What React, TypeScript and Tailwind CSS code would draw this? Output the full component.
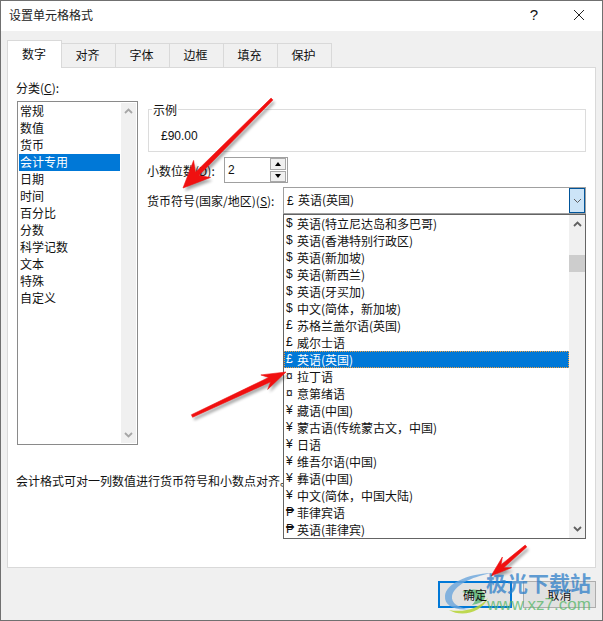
import React from "react";

const font = { fontFamily: '"Noto Sans CJK SC", "Liberation Sans", sans-serif' };
const latin = { fontFamily: '"Liberation Sans", sans-serif' };
const cats = ["常规", "数值", "货币", "会计专用", "日期", "时间", "百分比", "分数", "科学记数", "文本", "特殊", "自定义"];
const tabs = ["对齐", "字体", "边框", "填充", "保护"];
const items: [string, string][] = [
  ["$", "英语(特立尼达岛和多巴哥)"],
  ["$", "英语(香港特别行政区)"],
  ["$", "英语(新加坡)"],
  ["$", "英语(新西兰)"],
  ["$", "英语(牙买加)"],
  ["$", "中文(简体，新加坡)"],
  ["£", "苏格兰盖尔语(英国)"],
  ["£", "威尔士语"],
  ["£", "英语(英国)"],
  ["¤", "拉丁语"],
  ["¤", "意第绪语"],
  ["¥", "藏语(中国)"],
  ["¥", "蒙古语(传统蒙古文，中国)"],
  ["¥", "日语"],
  ["¥", "维吾尔语(中国)"],
  ["¥", "彝语(中国)"],
  ["¥", "中文(简体，中国大陆)"],
  ["₱", "菲律宾语"],
  ["₱", "英语(菲律宾)"],
];

function Chevron({ up, color = "#a6a6a6", sw = 1.8 }: { up?: boolean; color?: string; sw?: number }) {
  return (
    <svg width="9" height="6" viewBox="0 0 9 6" fill="none" stroke={color} strokeWidth={sw}>
      <path d={up ? "M1 5 L4.5 1.5 L8 5" : "M1 1 L4.5 4.5 L8 1"} />
    </svg>
  );
}

function Arrow({ x1, y1, x2, y2, hl, hw, nk, neck, tail }: { x1: number; y1: number; x2: number; y2: number; hl: number; hw: number; nk: number; neck: number; tail: number }) {
  const dx = x2 - x1, dy = y2 - y1;
  const len = Math.hypot(dx, dy);
  const ux = dx / len, uy = dy / len;
  const nx = -uy, ny = ux;
  const p = (a: number, b: number) => `${x2 - ux * a + nx * b},${y2 - uy * a + ny * b}`;
  const d = [p(len, tail), p(len, -tail), p(nk, -neck), p(hl, -hw), p(0, 0), p(hl, hw), p(nk, neck)].join(" ");
  return (
    <g>
      <polygon points={d} fill="#000" opacity="0.35" transform="translate(2,3)" style={{ filter: "blur(1.5px)" }} />
      <polygon points={d} fill="#f01010" strokeLinejoin="round" stroke="#f01010" strokeWidth="0.6" />
    </g>
  );
}

export default function App() {
  return (
    <div style={font} className="relative w-[603px] h-[621px] overflow-hidden bg-[#f0f0f0] border border-[#707070] text-[12px] leading-[17px] text-[#111]">
      <div className="h-[30px] bg-white flex items-center pl-[8px] pr-[17px] pb-[3px]">
        <span className="flex-1 text-[12px] text-[#222]">设置单元格格式</span>
        <span className="text-[15px] mr-[35px] font-medium" style={latin}>?</span>
        <svg width="12" height="12" viewBox="0 0 12 12" stroke="#222" strokeWidth="1" fill="none">
          <path d="M1 1 L11 11 M11 1 L1 11" />
        </svg>
      </div>

      <div className="pl-[6px] pr-[6px] pt-[9px]">
        <div className="flex items-end h-[27px] relative z-10">
          <div className="w-[55px] h-[28px] -mb-px bg-white border border-b-0 border-[#d9d9d9] flex items-center justify-center pb-[3px] pr-px">数字</div>
          {tabs.map((t) => (
            <div key={t} className="w-[54px] h-[24px] bg-[#f0f0f0] border-t border-r border-[#d9d9d9] flex items-center justify-center pb-[2px] pr-[2px]">{t}</div>
          ))}
        </div>

        <div className="h-[501px] bg-white border border-[#d9d9d9] pl-[8px] pr-[9px] pt-[12px]">
          <div className="flex h-[393px]">
            <div className="w-[122px] shrink-0">
              <div className="h-[21px] leading-[15px]">分类(<u>C</u>):</div>
              <div className="h-[344px] ml-px w-[121px] border border-[#8a8a8a] flex p-px">
                <div className="w-[101px]">
                  {cats.map((c) => (
                    <div key={c} className={`h-[17px] leading-[15px] pl-px ${c === "会计专用" ? "bg-[#0078d7] text-white" : ""}`}>{c}</div>
                  ))}
                </div>
                <div className="flex-1 ml-px bg-[#f0f0f0] flex flex-col justify-between items-center py-[5px]">
                  <Chevron up />
                  <Chevron />
                </div>
              </div>
            </div>

            <div className="ml-[9px] flex-1 pt-[29px] min-w-0">
              <div className="relative h-[43px] border border-[#dcdcdc] pl-[12px] pt-[18px] ml-px" style={latin}>
                <span className="absolute left-[3px] -top-[9px] bg-white px-px" style={font}>示例</span>
                £90.00
              </div>
              <div className="flex items-center h-[26px] mt-[5px]">
                <span className="w-[77px] leading-[13px]">小数位数(<u>D</u>):</span>
                <div className="w-[64px] h-[26px] border border-[#a0a0a0] flex items-center pl-[3px] justify-between" style={latin}>
                  <span>2</span>
                  <div className="w-[16px] h-[24px] mr-px flex flex-col gap-px">
                    <div className="flex-1 bg-[#f0f0f0] border border-[#a8a8a8] flex items-center justify-center">
                      <div className="w-0 h-0 border-x-[3.5px] border-x-transparent border-b-[4px] border-b-black" />
                    </div>
                    <div className="flex-1 bg-[#f0f0f0] border border-[#a8a8a8] flex items-center justify-center">
                      <div className="w-0 h-0 border-x-[3.5px] border-x-transparent border-t-[4px] border-t-black" />
                    </div>
                  </div>
                </div>
              </div>
              <div className="flex items-center h-[27px] mt-[4px]">
                <span className="w-[136px] shrink-0 leading-[13px]">货币符号(国家/地区)(<u>S</u>):</span>
                <div className="w-[303px] h-[27px] border border-[#a0a0a0] flex items-center pl-[3px]">
                  <span className="flex-1 leading-[15px]"><span className="inline-block w-[11px]" style={latin}>£</span>英语(英国)</span>
                  <div className="w-[16px] h-[25px] bg-[#cce4f7] border border-[#005499] flex items-center justify-center">
                    <Chevron color="#606060" sw={1} />
                  </div>
                </div>
              </div>
            </div>
          </div>
          <div className="leading-[15px] whitespace-nowrap">会计格式可对一列数值进行货币符号和小数点对齐。</div>
        </div>
      </div>

      <div className="flex justify-end gap-[11px] pt-[13px] pr-[6px]">
        <button className="w-[74px] h-[27px] bg-[#e1e1e1] border-2 border-[#0078d7] text-[12px] leading-[15px]"><span className="relative z-30">确定</span></button>
        <button className="w-[73px] h-[27px] bg-[#e1e1e1] border border-[#adadad] text-[12px] leading-[15px]">取消</button>
      </div>

      {/* open dropdown list */}
      <div className="absolute left-[282px] top-[213px] w-[303px] h-[325px] bg-white border border-[#646464] flex">
        <div className="w-[285px]">
          {items.map(([s, t]) => {
            const sel = s === "£" && t === "英语(英国)";
            return (
              <div key={t} className={`h-[17px] flex pl-px ${sel ? "bg-[#0078d7] text-white outline-1 -outline-offset-1 outline-dotted outline-[#f0a040]" : ""}`}>
                <span className="w-[12px] pl-px" style={latin}>{s}</span>
                <span>{t}</span>
              </div>
            );
          })}
        </div>
        <div className="flex-1 bg-[#f0f0f0] relative flex flex-col justify-between items-center py-[6px]">
          <Chevron up color="#606060" />
          <div className="absolute top-[40px] left-0 right-0 h-[17px] bg-[#cdcdcd]" />
          <Chevron color="#606060" />
        </div>
      </div>

      {/* annotations + watermark logo */}
      <svg className="absolute z-20 left-[-1px] top-[-1px] pointer-events-none" width="603" height="621">
        <path d="M492 573 C466 574 446 584 445 596 C444 606 456 611 470 609 C458 608 451 603 452 596 C454 586 470 577 492 573 Z" fill="#6aa5dc" opacity="0.8" />
        <path d="M462 592 C474 587 486 590 485 597 C484 602 478 604 472 605 C478 600 476 594 462 592 Z" fill="#5fb878" opacity="0.85" />
        <path d="M449 610 C464 613 480 608 488 598 C482 612 462 618 449 610 Z" fill="#b5d334" opacity="0.85" />
        <Arrow x1={272} y1={99} x2={183} y2={188} hl={27} hw={12} nk={20} neck={2.4} tail={1.3} />
        <Arrow x1={192} y1={416} x2={286} y2={372} hl={24} hw={8} nk={18} neck={2.4} tail={1.4} />
        <Arrow x1={526} y1={546} x2={491} y2={576} hl={21} hw={7} nk={15} neck={2} tail={1.2} />
      </svg>
      <div className="absolute z-20 left-[485px] top-[569px] text-[21px] leading-[24px] font-bold text-[#2f7fc8]/75 whitespace-nowrap">极光下载站</div>
      <div className="absolute z-20 left-[486px] top-[595px] text-[17px] leading-[18px] text-[#5cb86c]/80 whitespace-nowrap" style={latin}>www.xz7.com</div>
    </div>
  );
}
